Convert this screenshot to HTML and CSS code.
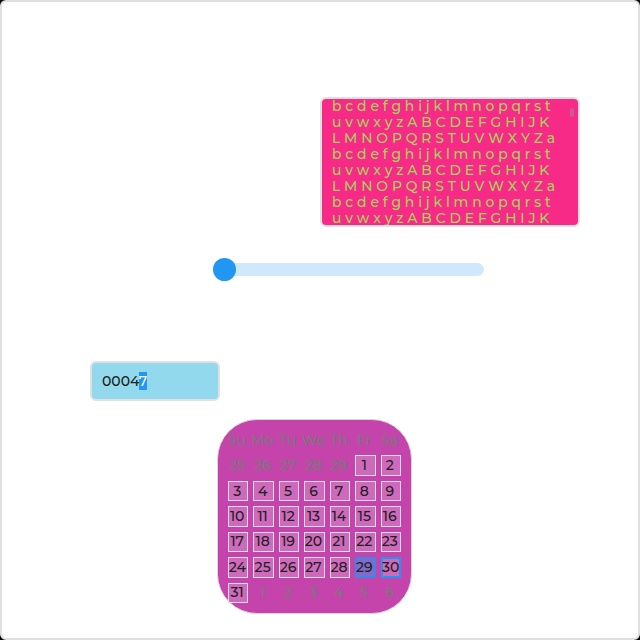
FILE: index.html
```html
<!DOCTYPE html>
<html lang="en">
<head>
<meta charset="utf-8">
<title>Widgets</title>
<link rel="stylesheet" href="styles.css">
</head>
<body>
<main class="screen">
  <div class="notes">
    <textarea class="notes-text" id="notes" aria-label="Notes" wrap="off" spellcheck="false">
L M N O P Q R S T U V W X Y Z a
b c d e f g h i j k l m n o p q r s t
u v w x y z A B C D E F G H I J K
L M N O P Q R S T U V W X Y Z a
b c d e f g h i j k l m n o p q r s t
u v w x y z A B C D E F G H I J K
L M N O P Q R S T U V W X Y Z a
b c d e f g h i j k l m n o p q r s t
u v w x y z A B C D E F G H I J K
L M N O P Q R S T U V W X Y Z a</textarea>
    <span class="notes-thumb"></span>
  </div>
  <input class="slider" type="range" min="0" max="100" value="0" aria-label="Level">
  <input class="number" id="number" type="text" value="00047" aria-label="Number">
  <section class="calendar" id="calendar" aria-label="Calendar"></section>
</main>
<script src="script.js"></script>
</body>
</html>
```
FILE: styles.css
```css
* { box-sizing: border-box; }

body {
  margin: 0;
  background: #000;
  color: #212121;
  font: 500 14px/16px Montserrat, Inter, sans-serif;
}

input, textarea, button {
  margin: 0;
  font: inherit;
  color: inherit;
  outline: none;
}

.screen {
  display: flex;
  flex-direction: column;
  align-items: flex-start;
  min-height: 100vh;
  padding: 95px 0 24px;
  background: #fff;
  border: 2px solid #e0e0e0;
  border-radius: 6px;
}

.notes {
  position: relative;
  width: 260px;
  margin-left: 50%;
  background: #f72b87;
  border: 2px solid #e0e0e0;
  border-radius: 6px;
  overflow: hidden;
}

.notes-text {
  display: block;
  width: 100%;
  height: 126px;
  padding: 0 10px;
  border: 0;
  background: none;
  color: #a6d45a;
  resize: none;
  overflow: hidden;
}

.notes-thumb {
  position: absolute;
  top: 9px;
  right: 4px;
  width: 4px;
  height: 9px;
  border-radius: 2px;
  background: #cc5c90;
}

.slider {
  appearance: none;
  width: 271px;
  height: 24px;
  margin: 30px 0 0 211px;
  background: none;
}

.slider::-webkit-slider-runnable-track {
  height: 13px;
  border-radius: 7px;
  background: #d1e8fc;
}

.slider::-webkit-slider-thumb {
  appearance: none;
  width: 23px;
  height: 23px;
  margin-top: -5px;
  border-radius: 50%;
  background: #2196f3;
}

.number {
  width: 130px;
  height: 40px;
  margin: 80px 0 0 88px;
  padding: 0 10px;
  background: #93d9ed;
  border: 2px solid #e0e0e0;
  border-radius: 6px;
}

.number::selection {
  background: #2196f3;
  color: #fff;
}

.calendar {
  display: grid;
  grid-template-columns: repeat(7, 1fr);
  grid-auto-rows: 1fr;
  gap: 5px;
  width: 195px;
  height: 195px;
  margin: 18px 0 0 215px;
  padding: 10px;
  background: #c444ac;
  border: 1px solid #dcd4da;
  border-radius: 40px;
}

.weekday, .day {
  display: flex;
  align-items: center;
  justify-content: center;
  min-width: 0;
  min-height: 0;
  padding: 0 2px 1px 0;
  white-space: nowrap;
}

.weekday { color: #7a777a; }

.day {
  background: rgba(255, 255, 255, 0.2);
  border: 1px solid #e0e0e0;
}

.day.outside {
  background: none;
  border-color: transparent;
  color: #7a777a;
}

.day.today {
  padding: 0;
  border: 2px solid #2196f3;
}

.day.selected {
  background: #806bce;
  border: 2px solid #3f86e2;
}
```
FILE: script.js
```js
const calendar = document.getElementById('calendar');

for (const name of ['Su', 'Mo', 'Tu', 'We', 'Th', 'Fr', 'Sa']) {
  const label = document.createElement('span');
  label.className = 'weekday';
  label.textContent = name;
  calendar.append(label);
}

function addDays(first, last, outside) {
  for (let n = first; n <= last; n++) {
    const day = document.createElement('button');
    day.type = 'button';
    day.className = 'day';
    day.textContent = n;
    if (outside) {
      day.classList.add('outside');
      day.disabled = true;
    } else if (n === 29) {
      day.classList.add('selected');
    } else if (n === 30) {
      day.classList.add('today');
    }
    calendar.append(day);
  }
}

addDays(25, 29, true);
addDays(1, 31, false);
addDays(1, 6, true);

document.getElementById('notes').scrollTop = 17;

const number = document.getElementById('number');
number.focus({ preventScroll: true });
number.setSelectionRange(4, 5);
```
